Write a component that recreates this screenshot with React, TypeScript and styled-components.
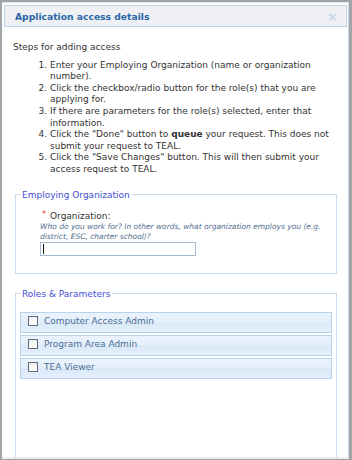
import React from "react";
import styled, { createGlobalStyle } from "styled-components";

const GlobalStyle = createGlobalStyle`
  html, body {
    margin: 0;
    padding: 0;
    background: #a4a4a6;
  }
  body {
    font-family: "DejaVu Sans", Verdana, sans-serif;
    color: #333;
  }
`;

const Dialog = styled.div`
  box-sizing: border-box;
  margin: 2px 0 0 2px;
  width: 347px;
  height: 457px;
  padding: 2px 1px 0 2px;
  background: #fff;
  border-top: 1px solid #dbe5ef;
  border-right: 1px solid #c3d5e8;
  border-bottom: 2px solid #ececec;
  display: flex;
  flex-direction: column;
  overflow: hidden;
`;

const TitleBar = styled.div`
  box-sizing: border-box;
  height: 22px;
  flex-shrink: 0;
  display: flex;
  align-items: center;
  justify-content: space-between;
  padding: 0 8px 0 10px;
  background: #eef0f3;
  border: 1px solid #bcd3ea;
`;

const Title = styled.span`
  font-size: 9.2px;
  font-weight: bold;
  color: #2a67a7;
`;

const Close = styled.span`
  font-size: 13px;
  font-weight: bold;
  line-height: 1;
  color: #c6d7ea;
`;

const Body = styled.div`
  flex: 1;
  overflow: hidden;
  padding: 15px 9px 0 9px;
  font-size: 9px;
  line-height: 11.6px;
`;

const Intro = styled.div`
  color: #333;
`;

const Steps = styled.ol`
  margin: 6px 0 0 0;
  padding-left: 37px;
  color: #333;
`;

const Fieldset = styled.fieldset<{ $grow?: boolean }>`
  margin: ${(p) => (p.$grow ? "14px" : "13px")} 1px 0 2px;
  padding: ${(p) => (p.$grow ? "12px 4px 0" : "0 4px 17px 24px")};
  border: 1px solid #c9dcee;
  min-height: ${(p) => (p.$grow ? "220px" : "0")};
  min-width: 0;
`;

const Legend = styled.legend<{ $offset?: number }>`
  padding: 0 2px;
  margin-left: ${(p) => p.$offset ?? 0}px;
  color: #3f4fd6;
  font-size: 9px;
  line-height: 12px;
`;

const FieldLabel = styled.div`
  margin-top: 8px;
  line-height: 12px;
  color: #333;
`;

const Required = styled.span`
  color: #d23b3b;
  font-size: 8px;
  vertical-align: 2px;
  margin: 0 4px 0 2px;
`;

const Help = styled.div`
  font-size: 7.5px;
  line-height: 10px;
  font-style: italic;
  color: #4f6c8c;
  padding-right: 10px;
`;

const TextBox = styled.div`
  box-sizing: border-box;
  width: 156px;
  height: 14px;
  border: 1px solid #a7bbd0;
  background: #fff;
  display: flex;
  align-items: center;
  padding-left: 2px;
`;

const Caret = styled.span`
  width: 1px;
  height: 10px;
  background: #111;
`;

const RoleRow = styled.label`
  box-sizing: border-box;
  display: flex;
  align-items: center;
  gap: 6px;
  height: 21px;
  margin-bottom: 2px;
  padding-left: 7px;
  border: 1px solid #b8d2ea;
  background: linear-gradient(
    to bottom,
    #eaf3fd 0%,
    #e4effb 48%,
    #dae8f7 52%,
    #e5f0fc 100%
  );
  color: #4a6d94;
  font-size: 9px;
`;

const Box = styled.span`
  box-sizing: border-box;
  width: 10px;
  height: 10px;
  border: 1px solid #5d6b7c;
  background: linear-gradient(to bottom, #f0f0f0, #ffffff);
  margin-top: -2px;
`;

const roles = ["Computer Access Admin", "Program Area Admin", "TEA Viewer"];

const App: React.FC = () => {
  return (
    <>
      <GlobalStyle />
      <Dialog>
        <TitleBar>
          <Title>Application access details</Title>
          <Close>×</Close>
        </TitleBar>
        <Body>
          <Intro>Steps for adding access</Intro>
          <Steps>
            <li>Enter your Employing Organization (name or organization number).</li>
            <li>Click the checkbox/radio button for the role(s) that you are applying for.</li>
            <li>If there are parameters for the role(s) selected, enter that information.</li>
            <li>
              Click the "Done" button to <b>queue</b> your request. This does not submit your
              request to TEAL.
            </li>
            <li>
              Click the "Save Changes" button. This will then submit your access request to
              TEAL.
            </li>
          </Steps>

          <Fieldset>
            <Legend $offset={-20}>Employing Organization</Legend>
            <FieldLabel>
              <Required>*</Required>Organization:
            </FieldLabel>
            <Help>
              Who do you work for? In other words, what organization employs you (e.g.
              district, ESC, charter school)?
            </Help>
            <TextBox>
              <Caret />
            </TextBox>
          </Fieldset>

          <Fieldset $grow>
            <Legend>Roles &amp; Parameters</Legend>
            {roles.map((r) => (
              <RoleRow key={r}>
                <Box />
                {r}
              </RoleRow>
            ))}
          </Fieldset>
        </Body>
      </Dialog>
    </>
  );
};

export default App;
